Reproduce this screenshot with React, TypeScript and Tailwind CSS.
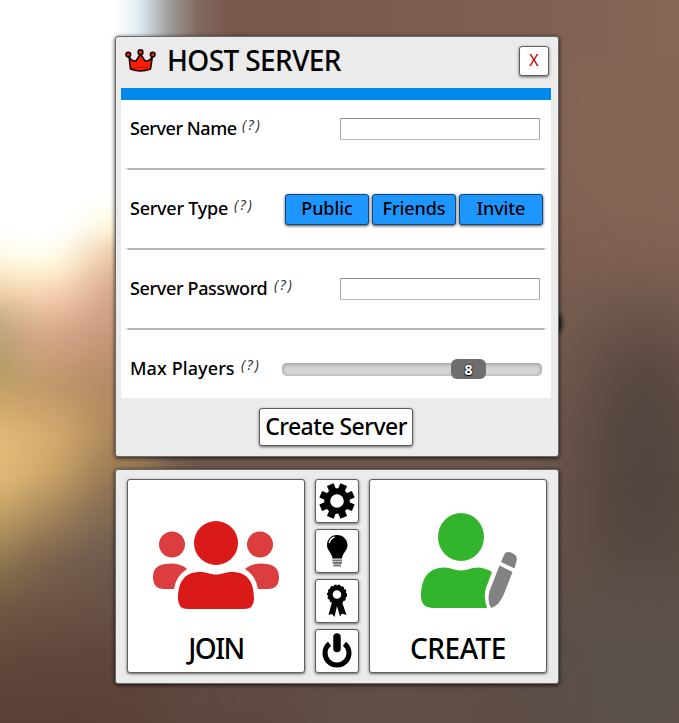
import React from "react";

const FONT = "font-['Noto_Sans','Open_Sans',sans-serif]";
const BOX = "border border-[#5f5f5f] rounded-[3px] bg-white shadow-[0_1px_3px_rgba(0,0,0,0.6)]";

const COLUMNS = [
  {
    id: "outer", x: -120, w: 134,
    stops: [[0, "#fff"], [228, "#fff"], [255, "#fffbe2"], [285, "#f4d9b4"], [320, "#bda67e"], [365, "#b09a66"], [400, "#cca869"], [450, "#e9be7b"], [485, "#e2b877"], [530, "#b8985f"], [570, "#8c744e"], [610, "#705841"], [660, "#63483b"], [723, "#5b3e35"]],
  },
  {
    id: "middle", x: 14, w: 40,
    stops: [[0, "#fff"], [245, "#fff"], [268, "#fffbdc"], [292, "#fbd6b6"], [335, "#d6a988"], [385, "#c09a68"], [440, "#dcb273"], [475, "#d4ac6d"], [515, "#ac8e5e"], [560, "#7f664c"], [610, "#6d5243"], [660, "#60463a"], [723, "#5b3e35"]],
  },
  {
    id: "bridge", x: 54, w: 34,
    stops: [[0, "#fff"], [232, "#fff"], [258, "#fffbdc"], [284, "#fbd6b6"], [330, "#d6a58a"], [383, "#bb9468"], [440, "#cda56a"], [475, "#bd9862"], [515, "#977a58"], [560, "#755d4c"], [610, "#6c5144"], [660, "#60463a"], [723, "#5b3e35"]],
  },
  {
    id: "inner", x: 88, w: 72,
    stops: [[0, "#fff"], [195, "#fff"], [225, "#fffbdd"], [252, "#eec6a6"], [288, "#d5a68d"], [335, "#c8957a"], [380, "#b28a64"], [430, "#ad885c"], [470, "#987853"], [510, "#816a53"], [550, "#705b4e"], [610, "#685044"], [660, "#60453a"], [723, "#5b4037"]],
  },
] as const;

function Backdrop() {
  return (
    <svg className="absolute inset-0 h-full w-full" viewBox="0 0 679 723" preserveAspectRatio="none">
      <defs>
        <linearGradient id="base" x1="0" y1="0" x2="0" y2="1">
          <stop offset="0" stopColor="#7b5b4d" />
          <stop offset="0.45" stopColor="#775d50" />
          <stop offset="0.68" stopColor="#6d574c" />
          <stop offset="1" stopColor="#5c483f" />
        </linearGradient>
        <linearGradient id="top" x1="0" y1="0" x2="679" y2="0" gradientUnits="userSpaceOnUse">
          <stop offset="0" stopColor="#fff" />
          <stop offset="0.17" stopColor="#fff" />
          <stop offset="0.205" stopColor="#dfebf1" />
          <stop offset="0.25" stopColor="#a09c9a" />
          <stop offset="0.29" stopColor="#816b60" />
          <stop offset="0.34" stopColor="#77584a" />
          <stop offset="0.55" stopColor="#7b5b4d" />
          <stop offset="1" stopColor="#856655" />
        </linearGradient>
        {COLUMNS.map((c) => (
          <linearGradient key={c.id} id={c.id} x1="0" y1="0" x2="0" y2="723" gradientUnits="userSpaceOnUse">
            {c.stops.map(([y, color]) => (
              <stop key={y} offset={y / 723} stopColor={color} />
            ))}
          </linearGradient>
        ))}
        <filter id="soft" filterUnits="userSpaceOnUse" x="-150" y="-150" width="1000" height="1050" colorInterpolationFilters="sRGB"><feGaussianBlur stdDeviation="20 8" /></filter>
        <filter id="wide" filterUnits="userSpaceOnUse" x="0" y="-200" width="1000" height="1200" colorInterpolationFilters="sRGB"><feGaussianBlur stdDeviation="42" /></filter>
        <filter id="spot" x="-50%" y="-50%" width="200%" height="200%"><feGaussianBlur stdDeviation="2" /></filter>
      </defs>
      <rect width="679" height="723" fill="url(#base)" />
      <ellipse cx="660" cy="100" rx="150" ry="180" fill="#846554" filter="url(#wide)" />
      <ellipse cx="645" cy="460" rx="58" ry="150" fill="#463d39" fillOpacity="0.85" filter="url(#wide)" />
      <ellipse cx="640" cy="680" rx="130" ry="110" fill="#5a504b" filter="url(#wide)" />
      <ellipse cx="400" cy="725" rx="100" ry="50" fill="#62524d" filter="url(#wide)" />
      <g filter="url(#soft)">
        {COLUMNS.map((c) => (
          <rect key={c.id} x={c.x} y="-60" width={c.w + 0.5} height="860" fill={`url(#${c.id})`} />
        ))}
      </g>
      <rect width="679" height="60" fill="url(#top)" />
      <ellipse cx="557" cy="323" rx="5" ry="10" fill="#181615" filter="url(#spot)" />
    </svg>
  );
}

function Crown() {
  return (
    <svg className="h-6 w-[31px]" viewBox="0 0 31 24">
      <g fill="#ff1e00" stroke="#160000" strokeWidth="1.6" strokeLinejoin="round">
        <path d="M4 7 5.500 20Q15.500 24 25.500 20L27.500 7Q25 12.500 20 12L15.500 5 11 12Q6 12.500 4 7Z" />
        <circle cx="3.300" cy="5.600" r="2.300" />
        <circle cx="15.500" cy="3.300" r="2.400" />
        <circle cx="27.700" cy="5.600" r="2.300" />
      </g>
      <path d="M6.500 19.200Q15.500 17 24.500 19.200" fill="none" stroke="#b01000" strokeWidth="0.900" />
    </svg>
  );
}

function Row({ label, fit, line = true, children }: { label: string; fit: string; line?: boolean; children: React.ReactNode }) {
  return (
    <div className={`flex flex-col ${line ? "h-20" : "h-[68px]"}`}>
      <div className="flex h-[58px] items-center pl-[9px] pr-2">
        <span className={`${fit} -mt-[2px] shrink-0 whitespace-nowrap text-[18px] font-medium leading-6`}>{label}</span>
        <span className="ml-[6px] -mt-[8px] text-[14px] italic leading-5 tracking-[1.8px] text-[#333]">(?)</span>
        <div className="ml-auto">{children}</div>
      </div>
      {line && <div className="mx-[4px] mt-[10px] h-[2px] bg-[linear-gradient(to_right,transparent,#b4b4b4_1%,#b4b4b4_99%,transparent)]" />}
    </div>
  );
}

function TypeButton({ label }: { label: string }) {
  return (
    <button className="h-[31px] w-[84px] rounded-[3px] border border-[#174777] bg-[#1e96ff] pb-[3px] text-[18px] font-medium leading-6 tracking-[-0.1px] shadow-[0_1px_3px_rgba(0,0,0,0.75)]">
      {label}
    </button>
  );
}

function Field() {
  return <input className="mr-[3px] block h-[22px] w-[200px] border border-x-[#a5a5a5] border-b-[#bbb] border-t-[#8e8e8e] bg-white outline-none" />;
}

function JoinIcon() {
  return (
    <svg className="h-[90px] w-[128px]" viewBox="0 0 128 90">
      <g fill="#dc3d3e">
        <circle cx="20" cy="24.500" r="13" />
        <circle cx="108" cy="24.500" r="13" />
        <path d="M22 69H12Q1 69 1 57C1 47 8 43.500 19 43.500Q29 43.500 35 49Q24 56 22 69Z" />
        <path d="M106 69H116Q127 69 127 57C127 47 120 43.500 109 43.500Q99 43.500 93 49Q104 56 106 69Z" />
      </g>
      <g fill="#da1a18">
        <circle cx="64" cy="23" r="22" />
        <path d="M26 79C26 60 34 52 48 52C56 52 57 54.500 64 54.500S72 52 80 52C94 52 102 60 102 79Q102 89 92 89H36Q26 89 26 79Z" />
      </g>
    </svg>
  );
}

function CreateIcon() {
  return (
    <svg className="h-[98px] w-[98px]" viewBox="0 0 98 98">
      <g fill="#32b42c">
        <ellipse cx="41" cy="25" rx="23" ry="24" />
        <path d="M1 85C1 65 9 56 24 55.500C32 55.500 33 58.500 41 58.500S50 55.500 58 55.500Q66 56 72 60L66 76Q63 84 67 96H12Q1 95 1 85Z" />
      </g>
      <g fill="#828282">
        <path d="M79.500 53.500 92.500 60 84 82Q79 94 71 96Q67 90 69.500 79Z" />
        <path d="M81 50 84.500 42Q87 38.500 93 41.500Q98 44 96.500 49L94.500 56.500Z" />
      </g>
    </svg>
  );
}

function Gear() {
  return (
    <svg className="h-9 w-9" viewBox="-18 -18 36 36">
      {[22.5, 67.5, 112.5, 157.5, 202.5, 247.5, 292.5, 337.5].map((a) => (
        <path key={a} d="M-3.600-9V-17.600H3.600V-9Z" transform={`rotate(${a})`} />
      ))}
      <circle r="9.800" fill="none" stroke="#000" strokeWidth="6" />
    </svg>
  );
}

function Bulb() {
  return (
    <svg className="h-9 w-9" viewBox="0 0 36 36">
      <path d="M18 2C11.500 2 8 7 8 12C8 17.500 13 20 13.500 25.500H23C23.500 20 28.500 17.500 28.500 12C28.500 7 24.500 2 18 2Z" />
      <path d="M10.300 10Q11 5.500 15.500 4" fill="none" stroke="#fff" strokeWidth="1.400" />
      <path d="M13.300 27.500H23M13.800 30H22.800M14.500 32.500H22" stroke="#777" strokeWidth="1.900" />
    </svg>
  );
}

function Ribbon() {
  return (
    <svg className="h-9 w-9" viewBox="0 0 36 36">
      <circle cx="18" cy="11.500" r="6.800" fill="none" stroke="#000" strokeWidth="5" />
      <circle cx="18" cy="11.500" r="9.200" fill="none" stroke="#000" strokeWidth="1.500" strokeDasharray="2.500 1.500" />
      <path d="M13 19 9.500 32 13 31 15.500 34 18 23 21 33.500 23 30.500 27.500 32 23 19Z" />
    </svg>
  );
}

function Power() {
  return (
    <svg className="h-9 w-9" viewBox="0 0 36 36">
      <path d="M10.500 10.700A12 12 0 1 0 25.500 10.700" fill="none" stroke="#000" strokeWidth="5" />
      <path d="M18 4V15.500" stroke="#000" strokeWidth="7.500" strokeLinecap="round" />
    </svg>
  );
}

function Tool({ children }: { children: React.ReactNode }) {
  return <button className={`flex h-11 w-11 items-center justify-center ${BOX}`}>{children}</button>;
}

export default function App() {
  return (
    <div className={`relative h-[723px] w-full overflow-hidden text-black ${FONT}`}>
      <Backdrop />
      <main className="relative ml-[115px] flex w-[444px] flex-col gap-3 pt-9">
        <section className="h-[421px] rounded-[3px] border border-[#6b6b6b] bg-[#ebebeb] pl-[5px] pr-[7px] shadow-[0_1px_4px_rgba(0,0,0,0.8)]">
          <header className="flex h-[51px] items-center pb-1 pl-1 pr-[2px]">
            <Crown />
            <h1 className="ml-[11px] -mt-[2px] whitespace-nowrap text-[28px] font-medium leading-9 tracking-[-0.6px]">HOST SERVER</h1>
            <button className={`ml-auto flex h-[30px] w-[30px] items-center justify-center pb-[2px] text-[16px] leading-5 text-[#b50000] ${BOX}`}>X</button>
          </header>
          <div className="h-3 bg-[#0089ec]" />
          <div className="h-[298px] bg-white">
            <Row label="Server Name" fit="w-[106px] tracking-[-0.45px]"><Field /></Row>
            <Row label="Server Type" fit="w-[98px] tracking-[-0.25px]">
              <div className="flex gap-[3px]">
                <TypeButton label="Public" />
                <TypeButton label="Friends" />
                <TypeButton label="Invite" />
              </div>
            </Row>
            <Row label="Server Password" fit="w-[138px] tracking-[-0.35px]"><Field /></Row>
            <Row label="Max Players" fit="w-[105px] tracking-[0.1px]" line={false}>
              <div className="mr-px flex h-[13px] w-[260px] items-center rounded-[5px] bg-[#d3d3d3] pl-[169px] shadow-[inset_0_1px_4px_rgba(0,0,0,0.3)]">
                <div className="h-5 w-[35px] rounded-[6px] bg-[#6e6e6e] text-center text-[14px] font-bold leading-[21px] text-white [text-shadow:0_0_2px_#000,0_1px_1px_#000]">8</div>
              </div>
            </Row>
          </div>
          <div className="flex justify-center pt-[10px]">
            <button className={`h-[38px] w-[154px] whitespace-nowrap pb-[2px] text-[23px] font-medium leading-8 tracking-[-0.55px] ${BOX}`}>Create Server</button>
          </div>
        </section>
        <section className="flex h-[215px] gap-[10px] rounded-[3px] border border-[#6b6b6b] bg-[#ebebeb] pl-[11px] pt-[9px] shadow-[0_1px_4px_rgba(0,0,0,0.8)]">
          <button className={`flex h-[194px] w-[178px] flex-col items-center pt-[40px] ${BOX}`}>
            <JoinIcon />
            <span className="mt-[20px] text-[28px] font-medium leading-9 tracking-[-1.5px]">JOIN</span>
          </button>
          <div className="flex flex-col gap-[6px]">
            <Tool><Gear /></Tool>
            <Tool><Bulb /></Tool>
            <Tool><Ribbon /></Tool>
            <Tool><Power /></Tool>
          </div>
          <button className={`flex h-[194px] w-[178px] flex-col items-center pt-[32px] ${BOX}`}>
            <div className="pl-[21px]"><CreateIcon /></div>
            <span className="mt-[20px] text-[28px] font-medium leading-9 tracking-[-0.5px]">CREATE</span>
          </button>
        </section>
      </main>
    </div>
  );
}
